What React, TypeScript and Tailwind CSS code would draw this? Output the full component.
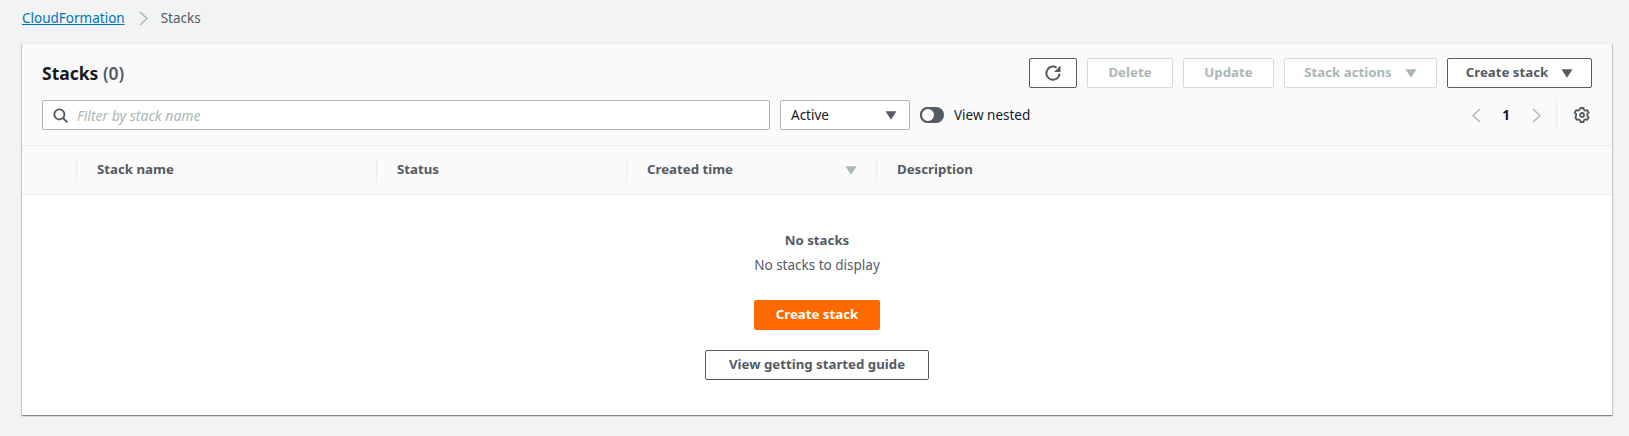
import React from 'react';

const Caret = ({ className }: { className: string }) => (
  <svg viewBox="0 0 12 9" className={`w-3 h-[9px] ${className}`}>
    <path d="M0.5 0.25h11L6 8.75z" fill="currentColor" />
  </svg>
);

const Btn = ({ children, disabled, className = '' }: { children: React.ReactNode; disabled?: boolean; className?: string }) => (
  <button
    className={`h-[30px] rounded-[2px] border text-[13.25px] font-bold flex items-center justify-center ${
      disabled ? 'border-[#d5dbdb] text-[#aab7b8] bg-white' : 'border-[#545b64] text-[#545b64] bg-white'
    } ${className}`}
  >
    {children}
  </button>
);

const HeadCell = ({ label, sort }: { label: string; sort?: boolean }) => (
  <div className="relative flex items-center pl-[21px] pr-[19px] justify-between">
    <span className="absolute left-0 top-[12px] h-[24px] w-px bg-[#eaeded]" />
    <span className="text-[13.25px] font-bold text-[#545b64]">{label}</span>
    {sort && <Caret className="text-[#aab7b8]" />}
  </div>
);

export default function App() {
  return (
    <div className="h-[436px] w-[1629px] overflow-hidden bg-[#f2f3f3] font-['Noto_Sans','Open_Sans',sans-serif] pl-[22px] pr-[17px]">
      <nav className="h-[43px] pb-[7px] flex items-center text-[13.5px]">
        <a className="text-[#0073bb] underline">CloudFormation</a>
        <svg viewBox="0 0 9 15" className="w-[9px] h-[15px] ml-[14px] mr-[13px] text-[#aab7b8]" fill="none" stroke="currentColor" strokeWidth="1.5">
          <path d="M1 1l7 6.5L1 14" />
        </svg>
        <span className="text-[#545b64]">Stacks</span>
      </nav>

      <section className="h-[372px] bg-white border-t border-[#eaeded] shadow-[0_1px_1px_0_rgba(0,28,36,0.3),1px_1px_1px_0_rgba(0,28,36,0.15),-1px_1px_1px_0_rgba(0,28,36,0.15)]">
        <header className="bg-[#fafafa] border-b border-[#eaeded] pl-[20px] pr-[20px] pt-[14px] pb-[15px]">
          <div className="flex items-center justify-between">
            <h1 className="text-[17.5px] font-bold text-[#16191f]">
              Stacks <span className="font-semibold text-[#545b64]">(0)</span>
            </h1>
            <div className="flex gap-[10px]">
              <Btn className="w-[48px]">
                <svg viewBox="0 0 16 16" className="w-4 h-4" fill="none" stroke="currentColor" strokeWidth="2">
                  <path d="M14.6 8.6A6.6 6.6 0 1 1 11.6 2.6" />
                  <path d="M15.5 0.5v6.4H9.1z" fill="currentColor" stroke="none" />
                </svg>
              </Btn>
              <Btn disabled className="w-[86px]">Delete</Btn>
              <Btn disabled className="w-[91px]">Update</Btn>
              <Btn disabled className="w-[153px] gap-[13px]">
                Stack actions <Caret className="text-[#aab7b8]" />
              </Btn>
              <Btn className="w-[145px] gap-[13px]">
                Create stack <Caret className="text-[#545b64]" />
              </Btn>
            </div>
          </div>

          <div className="flex items-center mt-[12px] h-[30px]">
            <div className="w-[728px] h-[30px] bg-white border border-[#aab7b8] rounded-[2px] flex items-center pl-[10px] gap-[9px]">
              <svg viewBox="0 0 16 16" className="w-[15px] h-[15px] text-[#545b64]" fill="none" stroke="currentColor" strokeWidth="2">
                <circle cx="6.8" cy="6.8" r="5.4" />
                <path d="m10.8 10.8 4.4 4.4" />
              </svg>
              <span className="text-[14px] italic text-[#aab7b8]">Filter by stack name</span>
            </div>
            <div className="ml-[10px] w-[130px] h-[30px] bg-white border border-[#aab7b8] rounded-[2px] flex items-center justify-between pl-[10px] pr-[12px]">
              <span className="text-[13.5px] text-[#16191f]">Active</span>
              <Caret className="text-[#545b64]" />
            </div>
            <div className="ml-[10px] w-6 h-4 rounded-full bg-[#545b64] relative">
              <span className="absolute left-0 top-0 w-4 h-4 rounded-full bg-white border-2 border-[#545b64]" />
            </div>
            <span className="ml-[10px] text-[13.5px] text-[#16191f]">View nested</span>

            <div className="ml-auto flex items-center h-[30px] mr-[2px]">
              <svg viewBox="0 0 9 15" className="w-[9px] h-[15px] text-[#aab7b8]" fill="none" stroke="currentColor" strokeWidth="1.5">
                <path d="M8 1 1 7.5 8 14" />
              </svg>
              <span className="ml-[21px] mr-[22px] text-[13.5px] font-bold text-[#16191f]">1</span>
              <svg viewBox="0 0 9 15" className="w-[9px] h-[15px] text-[#aab7b8]" fill="none" stroke="currentColor" strokeWidth="1.5">
                <path d="M1 1l7 6.5L1 14" />
              </svg>
              <span className="ml-[15px] mr-[17px] w-px h-[30px] bg-[#eaeded]" />
              <svg viewBox="0 0 16 16" className="w-4 h-4 text-[#545b64]" fill="none" stroke="currentColor" strokeWidth="1.8" strokeLinejoin="round">
                <path d="M6.5 1h3l.4 1.8 1.5.9 1.8-.6 1.5 2.6-1.4 1.3v2l1.4 1.3-1.5 2.6-1.8-.6-1.5.9-.4 1.8h-3l-.4-1.8-1.5-.9-1.8.6-1.5-2.6L2.1 9V7L.7 5.7l1.5-2.6 1.8.6 1.5-.9z" />
                <circle cx="8" cy="8" r="2" />
              </svg>
            </div>
          </div>
        </header>

        <div className="h-[49px] bg-[#fafafa] border-b border-[#eaeded] grid grid-cols-[54px_300px_250px_250px_1fr]">
          <div />
          <HeadCell label="Stack name" />
          <HeadCell label="Status" />
          <HeadCell label="Created time" sort />
          <HeadCell label="Description" />
        </div>

        <div className="flex flex-col items-center pt-[34px] text-[13.5px] text-[#545b64]">
          <div className="font-bold text-[13.25px] h-[22px] leading-[22px]">No stacks</div>
          <div className="h-[22px] leading-[22px] mt-[3px]">No stacks to display</div>
          <button className="mt-[24px] w-[126px] h-[30px] rounded-[2px] bg-[#ff6a00] text-white text-[13.25px] font-bold flex items-center justify-center">
            Create stack
          </button>
          <button className="mt-[20px] w-[224px] h-[30px] rounded-[2px] bg-white border border-[#545b64] text-[13.25px] font-bold flex items-center justify-center">
            View getting started guide
          </button>
        </div>
      </section>
    </div>
  );
}
